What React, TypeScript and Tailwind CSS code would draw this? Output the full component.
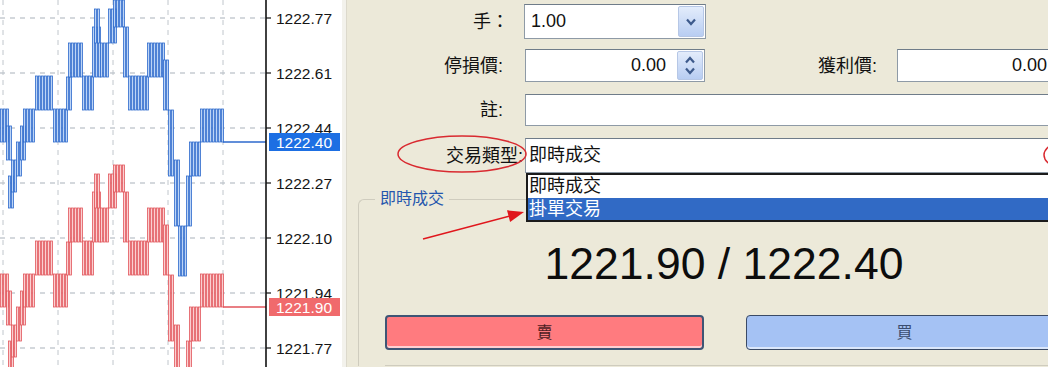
import React from 'react';

type Seg = [number, number, number, number];

// blue (ask) clusters: x0, x1, top, bottom
const SEGS: Seg[] = [
  [0, 7, 109, 142],
  [6, 10, 126, 160],
  [8, 12, 176, 208],
  [11, 16, 160, 192],
  [16, 22, 142, 176],
  [20, 26, 126, 160],
  [23, 35, 109, 142],
  [35, 53, 76, 110],
  [53, 67, 109, 142],
  [66, 72, 77, 110],
  [68, 82, 43, 77],
  [82, 92, 76, 110],
  [92, 100, 27, 77],
  [94, 100, 9, 43],
  [100, 107, 43, 77],
  [108, 115, 9, 43],
  [113, 125, 0, 27],
  [123, 128, 27, 77],
  [128, 147, 76, 110],
  [147, 163, 43, 77],
  [163, 168, 60, 110],
  [168, 174, 110, 176],
  [174, 180, 160, 226],
  [178, 186, 226, 276],
  [186, 192, 176, 226],
  [189, 200, 142, 176],
  [200, 223, 109, 142],
];

const GRID_Y = [18, 73, 128, 183, 238, 293, 348];
const GRID_X = [3, 58, 113, 168, 223];
const LABELS = ['1222.77', '1222.61', '1222.44', '1222.27', '1222.10', '1221.94', '1221.77'];

function Bars({ dy, dark, light }: { dy: number; dark: string; light: string }) {
  const out: React.ReactNode[] = [];
  SEGS.forEach(([x0, x1, t, b], i) => {
    for (let x = x0; x < x1; x += 3) {
      out.push(
        <rect
          key={`${i}-${x}`}
          x={x + 0.5}
          y={t + dy}
          width={2}
          height={b - t}
          fill={light}
          stroke={dark}
          strokeWidth={0.8}
        />
      );
    }
  });
  return (
    <g>
      {out}
      <line x1={223} y1={142 + dy} x2={266} y2={142 + dy} stroke={dark} strokeWidth={1.6} />
    </g>
  );
}

function Chart() {
  return (
    <svg width={342} height={367} className="block shrink-0 bg-white">
      {GRID_Y.map((y) => (
        <line key={y} x1={0} y1={y} x2={266} y2={y} stroke="#a9b1ba" strokeDasharray="5 5" />
      ))}
      {GRID_X.map((x) => (
        <line key={x} x1={x} y1={0} x2={x} y2={367} stroke="#c0c6cc" strokeDasharray="5 5" />
      ))}
      <Bars dy={165} dark="#e2555b" light="#fbd0d1" />
      <Bars dy={0} dark="#2c69cc" light="#bcd4f6" />
      <line x1={266} y1={0} x2={266} y2={367} stroke="#111" strokeWidth={1.6} />
      {GRID_Y.map((y, i) => (
        <g key={y}>
          <line x1={266} y1={y} x2={271} y2={y} stroke="#111" strokeWidth={1.2} />
          <text x={276} y={y + 5.5} fontSize={15.5} fill="#151515" fontFamily="Liberation Sans, sans-serif">
            {LABELS[i]}
          </text>
        </g>
      ))}
      <rect x={269} y={133} width={71} height={18} fill="#1d6fe3" />
      <text x={276} y={147.5} fontSize={15.5} fill="#fff" fontFamily="Liberation Sans, sans-serif">1222.40</text>
      <rect x={269} y={298} width={71} height={18} fill="#f06a6c" />
      <text x={276} y={312.5} fontSize={15.5} fill="#fff" fontFamily="Liberation Sans, sans-serif">1221.90</text>
    </svg>
  );
}

function Chevron({ up }: { up?: boolean }) {
  return (
    <svg width={12} height={8} viewBox="0 0 12 8">
      <path d={up ? 'M2 6.5 L6 2 L10 6.5' : 'M2 1.5 L6 6 L10 1.5'} fill="none" stroke="#3d5a8c" strokeWidth={2.2} />
    </svg>
  );
}

const inputCls = 'h-full bg-white border border-[#8e9aa6] border-t-[#6f7c89] flex items-center';

export default function App() {
  return (
    <div className="relative w-[1048px] h-[367px] overflow-hidden flex font-['Liberation_Sans','Noto_Sans_CJK_TC',sans-serif] text-[#111]">
      <Chart />
      <div className="w-[5px] shrink-0 bg-[#f3f2ec] border-r border-[#dcd9cc]" />
      <div className="relative flex-1 bg-[#ece9d9] flex flex-col">
        {/* row 1 */}
        <div className="mt-[4px] h-[35px] flex items-center shrink-0">
          <div className="w-[162px] text-right text-[18px] leading-none">手：</div>
          <div className={`ml-[15px] w-[182px] ${inputCls} pl-[6px] pr-[1px]`}>
            <span className="flex-1 text-[18px]">1.00</span>
            <div className="w-[26px] h-[31px] rounded-[2px] border border-[#b6c7e6] bg-gradient-to-b from-[#e3ecfb] to-[#b8cdf2] flex items-center justify-center">
              <Chevron />
            </div>
          </div>
        </div>
        {/* row 2 */}
        <div className="mt-[10px] h-[33px] flex items-center shrink-0">
          <div className="w-[156px] text-right text-[18px] leading-none">停損價:</div>
          <div className={`ml-[22px] w-[180px] ${inputCls} pr-[1px]`}>
            <span className="flex-1 text-right text-[18px] pr-[11px]">0.00</span>
            <div className="w-[26px] h-[29px] rounded-[2px] border border-[#b6c7e6] bg-gradient-to-b from-[#e3ecfb] to-[#b8cdf2] flex flex-col items-center justify-center gap-[3px]">
              <Chevron up />
              <Chevron />
            </div>
          </div>
          <div className="ml-[113px] text-[18px] leading-none">獲利價:</div>
          <div className={`ml-[20px] w-[170px] ${inputCls} shrink-0`}>
            <span className="flex-1 text-right text-[18px] pr-[19px]">0.00</span>
          </div>
        </div>
        {/* row 3 */}
        <div className="mt-[12px] h-[32px] flex items-center shrink-0">
          <div className="w-[156px] text-right text-[18px] leading-none">註:</div>
          <div className={`ml-[22px] w-[540px] shrink-0 ${inputCls}`} />
        </div>
        {/* row 4 */}
        <div className="mt-[12px] h-[35px] flex items-center shrink-0">
          <div className="w-[176px] text-right text-[18px] leading-none">交易類型:</div>
          <div className={`ml-[2px] w-[540px] shrink-0 ${inputCls} pl-[3px] text-[18px]`}>即時成交</div>
        </div>

        {/* group */}
        <fieldset className="mt-[15px] ml-[11px] w-[720px] shrink-0 border-t border-l border-[#cfccbe] rounded-tl-[6px]">
          <legend className="ml-[16px] px-[5px] text-[16px] leading-[22px] text-[#2456ad]">即時成交</legend>
          <div className="pl-[26px]">
            <div className="w-[678px] mt-[28px] text-center text-[44.5px] leading-[52px] text-[#0d0d0d]">1221.90 / 1222.40</div>
            <div className="w-[678px] mt-[25px] flex gap-[42px]">
              <button className="w-[319px] h-[35px] shrink-0 rounded-[4px] border-2 border-[#3e5575] bg-[#ff7b7f] shadow-[inset_0_-2px_0_#ffd0d2] text-[16px] text-[#4d1c22]">賣</button>
              <button className="w-[317px] h-[35px] shrink-0 rounded-[4px] border border-[#3a4a66] bg-[#a5c2f4] shadow-[inset_0_-2px_0_#dbe7fb] text-[16px] text-[#3b4d6f]">買</button>
            </div>
            <div className="mt-[15px] border-t border-[#cfccbe]" />
          </div>
        </fieldset>

        {/* open dropdown list */}
        <div className="absolute left-[179px] top-[173px] w-[540px] border-2 border-[#1b1b1b] border-r-0 bg-white text-[18px]">
          <div className="h-[23px] leading-[23px] pl-[1px]">即時成交</div>
          <div className="h-[22px] leading-[22px] pl-[1px] bg-[#316ac5] text-white">掛單交易</div>
        </div>
      </div>

      {/* annotations */}
      <svg className="absolute inset-0 pointer-events-none" width={1048} height={367}>
        <ellipse cx={462} cy={154} rx={64} ry={18} fill="none" stroke="#d92a30" strokeWidth={1.5} />
        <ellipse cx={1076} cy={155} rx={32} ry={16} fill="none" stroke="#d92a30" strokeWidth={1.5} />
        <line x1={423} y1={239} x2={510} y2={216} stroke="#e0161c" strokeWidth={1.5} />
        <polygon points="524,212 510.1,221.9 507,210.3" fill="#e0161c" />
      </svg>
    </div>
  );
}
